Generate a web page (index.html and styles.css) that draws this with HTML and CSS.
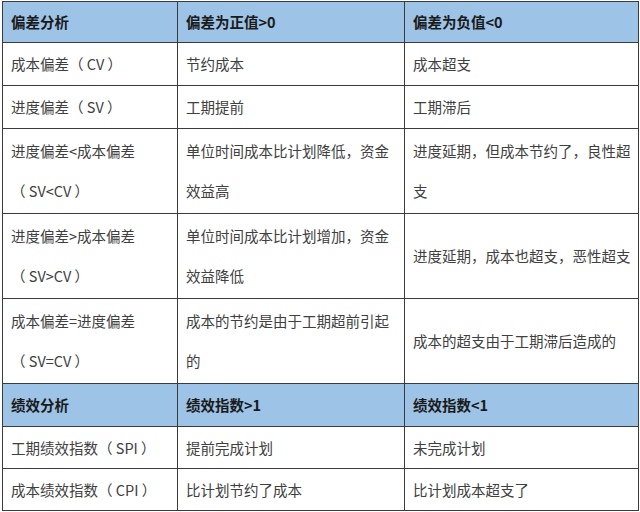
FILE: index.html
```html
<!DOCTYPE html>
<html lang="zh">
<head>
<meta charset="utf-8">
<link rel="stylesheet" href="styles.css">
</head>
<body>
<table class="grid">
  <colgroup>
    <col class="c1"><col class="c2"><col class="c3">
  </colgroup>
  <tr class="head h41">
    <td>偏差分析</td><td>偏差为正值&gt;0</td><td>偏差为负值&lt;0</td>
  </tr>
  <tr class="h43">
    <td>成本偏差（ CV ）</td><td>节约成本</td><td>成本超支</td>
  </tr>
  <tr class="h43">
    <td>进度偏差（ SV ）</td><td>工期提前</td><td>工期滞后</td>
  </tr>
  <tr class="h85">
    <td>进度偏差&lt;成本偏差<br>（ SV&lt;CV ）</td>
    <td>单位时间成本比计划降低，资金<br>效益高</td>
    <td>进度延期，但成本节约了，良性超<br>支</td>
  </tr>
  <tr class="h85">
    <td>进度偏差&gt;成本偏差<br>（ SV&gt;CV ）</td>
    <td>单位时间成本比计划增加，资金<br>效益降低</td>
    <td>进度延期，成本也超支，恶性超支</td>
  </tr>
  <tr class="h85">
    <td>成本偏差=进度偏差<br>（ SV=CV ）</td>
    <td>成本的节约是由于工期超前引起<br>的</td>
    <td>成本的超支由于工期滞后造成的</td>
  </tr>
  <tr class="head h43">
    <td>绩效分析</td><td>绩效指数&gt;1</td><td>绩效指数&lt;1</td>
  </tr>
  <tr class="h42">
    <td>工期绩效指数（ SPI ）</td><td>提前完成计划</td><td>未完成计划</td>
  </tr>
  <tr class="h42">
    <td>成本绩效指数（ CPI ）</td><td>比计划节约了成本</td><td>比计划成本超支了</td>
  </tr>
</table>
</body>
</html>
```

FILE: styles.css
```css
html, body {
  margin: 0;
  padding: 0;
  background: #ffffff;
}
body {
  padding: 1px 0 0 2px;
}
.grid {
  border-collapse: collapse;
  table-layout: fixed;
  width: 636px;
  font-family: "Noto Sans CJK SC", "Microsoft YaHei", sans-serif;
  font-size: 14.5px;
  color: #404040;
}
.c1 { width: 175px; }
.c2 { width: 227px; }
.c3 { width: 234px; }
.grid td {
  border: 1px solid #3b3b3b;
  padding: 0 8px;
  line-height: 40px;
  vertical-align: middle;
  white-space: nowrap;
  overflow: hidden;
}
.head td {
  background: #9dc3e6;
  font-weight: bold;
  color: #1a1a1a;
}
.h41 { height: 41px; }
.h42 { height: 42px; }
.h43 { height: 43px; }
.h85 { height: 85px; }
```
